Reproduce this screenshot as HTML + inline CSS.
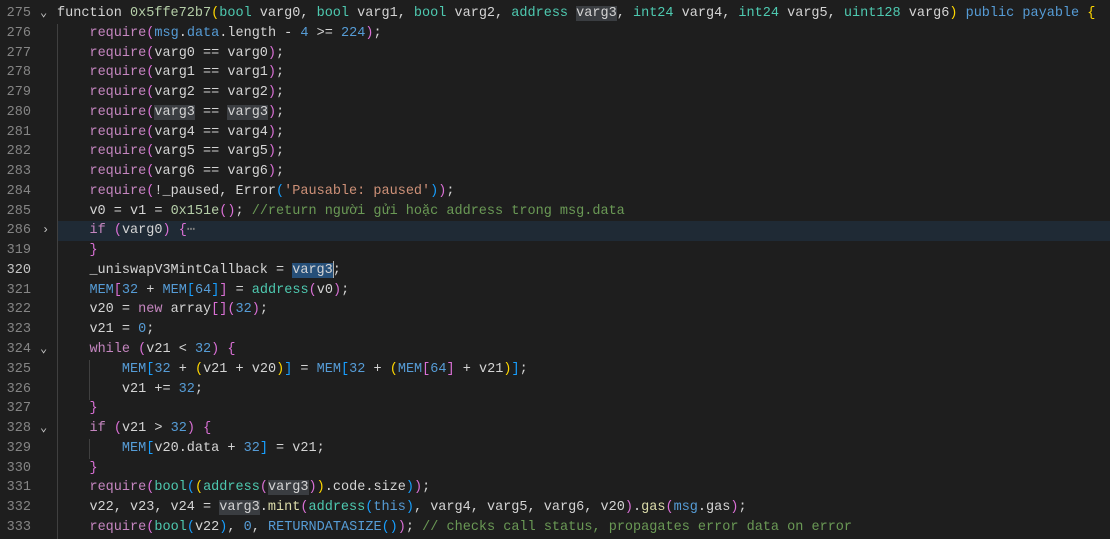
<!DOCTYPE html>
<html><head><meta charset="utf-8"><style>
html,body{margin:0;padding:0;background:#1e1e1e;width:1110px;height:539px;overflow:hidden}
.ed{position:relative;padding-top:4px;font-family:"Liberation Mono",monospace;font-size:13.53px;color:#d4d4d4}
.l{position:relative;height:19.77px;line-height:19.77px;white-space:pre}
.n{position:absolute;left:0;width:31px;text-align:right;color:#858585}
.cur .n{color:#c6c6c6}
.c{position:absolute;left:57px}
.fold{position:absolute;left:40px;top:0;color:#c5c5c5;font-size:12px}
.hl{position:absolute;left:57px;right:0;top:0;bottom:0;background:#1f2a35}
.g{position:absolute;top:0;bottom:0;width:1px;background:#404040}
.k{color:#c586c0}.t{color:#4ec9b0}.b{color:#569cd6}.s{color:#ce9178}.cm{color:#6a9955}
.y{color:#ffd700}.p{color:#da70d6}.q{color:#179fff}.h{color:#b5cea8}.f{color:#dcdcaa}
.w{background:#3a3d41}.sel{background:#264f78}
.caret{display:inline-block;width:1px;height:17px;background:#aeafad;vertical-align:middle;margin-right:-1px}
</style></head><body><div class="ed">
<div class="l"><span class="n">275</span><span class="fold">⌄</span><span class="c">function <span class="h">0x5ffe72b7</span><span class="y">(</span><span class="t">bool</span> varg0, <span class="t">bool</span> varg1, <span class="t">bool</span> varg2, <span class="t">address</span> <span class="w">varg3</span>, <span class="t">int24</span> varg4, <span class="t">int24</span> varg5, <span class="t">uint128</span> varg6<span class="y">)</span> <span class="b">public</span> <span class="b">payable</span> <span class="y">{</span></span></div>
<div class="l"><span class="n">276</span><span class="c">    <span class="k">require</span><span class="p">(</span><span class="b">msg</span>.<span class="b">data</span>.length - <span class="b">4</span> &gt;= <span class="b">224</span><span class="p">)</span>;</span></div>
<div class="l"><span class="n">277</span><span class="c">    <span class="k">require</span><span class="p">(</span>varg0 == varg0<span class="p">)</span>;</span></div>
<div class="l"><span class="n">278</span><span class="c">    <span class="k">require</span><span class="p">(</span>varg1 == varg1<span class="p">)</span>;</span></div>
<div class="l"><span class="n">279</span><span class="c">    <span class="k">require</span><span class="p">(</span>varg2 == varg2<span class="p">)</span>;</span></div>
<div class="l"><span class="n">280</span><span class="c">    <span class="k">require</span><span class="p">(</span><span class="w">varg3</span> == <span class="w">varg3</span><span class="p">)</span>;</span></div>
<div class="l"><span class="n">281</span><span class="c">    <span class="k">require</span><span class="p">(</span>varg4 == varg4<span class="p">)</span>;</span></div>
<div class="l"><span class="n">282</span><span class="c">    <span class="k">require</span><span class="p">(</span>varg5 == varg5<span class="p">)</span>;</span></div>
<div class="l"><span class="n">283</span><span class="c">    <span class="k">require</span><span class="p">(</span>varg6 == varg6<span class="p">)</span>;</span></div>
<div class="l"><span class="n">284</span><span class="c">    <span class="k">require</span><span class="p">(</span>!_paused, Error<span class="q">(</span><span class="s">'Pausable: paused'</span><span class="q">)</span><span class="p">)</span>;</span></div>
<div class="l"><span class="n">285</span><span class="c">    v0 = v1 = <span class="h">0x151e</span><span class="p">()</span>; <span class="cm">//return người gửi hoặc address trong msg.data</span></span></div>
<div class="l"><span class="hl"></span><span class="n">286</span><span class="fold" style="left:42px">›</span><span class="c">    <span class="k">if</span> <span class="p">(</span>varg0<span class="p">)</span> <span class="p">{</span><span style="color:#808080">⋯</span></span></div>
<div class="l"><span class="n">319</span><span class="c">    <span class="p">}</span></span></div>
<div class="l cur"><span class="n">320</span><span class="c">    _uniswapV3MintCallback = <span class="sel">varg3</span><span class="caret"></span>;</span></div>
<div class="l"><span class="n">321</span><span class="c">    <span class="b">MEM</span><span class="p">[</span><span class="b">32</span> + <span class="b">MEM</span><span class="q">[</span><span class="b">64</span><span class="q">]</span><span class="p">]</span> = <span class="t">address</span><span class="p">(</span>v0<span class="p">)</span>;</span></div>
<div class="l"><span class="n">322</span><span class="c">    v20 = <span class="k">new</span> array<span class="p">[]</span><span class="p">(</span><span class="b">32</span><span class="p">)</span>;</span></div>
<div class="l"><span class="n">323</span><span class="c">    v21 = <span class="b">0</span>;</span></div>
<div class="l"><span class="n">324</span><span class="fold">⌄</span><span class="c">    <span class="k">while</span> <span class="p">(</span>v21 &lt; <span class="b">32</span><span class="p">)</span> <span class="p">{</span></span></div>
<div class="l"><span class="n">325</span><span class="c">        <span class="b">MEM</span><span class="q">[</span><span class="b">32</span> + <span class="y">(</span>v21 + v20<span class="y">)</span><span class="q">]</span> = <span class="b">MEM</span><span class="q">[</span><span class="b">32</span> + <span class="y">(</span><span class="b">MEM</span><span class="p">[</span><span class="b">64</span><span class="p">]</span> + v21<span class="y">)</span><span class="q">]</span>;</span></div>
<div class="l"><span class="n">326</span><span class="c">        v21 += <span class="b">32</span>;</span></div>
<div class="l"><span class="n">327</span><span class="c">    <span class="p">}</span></span></div>
<div class="l"><span class="n">328</span><span class="fold">⌄</span><span class="c">    <span class="k">if</span> <span class="p">(</span>v21 &gt; <span class="b">32</span><span class="p">)</span> <span class="p">{</span></span></div>
<div class="l"><span class="n">329</span><span class="c">        <span class="b">MEM</span><span class="q">[</span>v20.data + <span class="b">32</span><span class="q">]</span> = v21;</span></div>
<div class="l"><span class="n">330</span><span class="c">    <span class="p">}</span></span></div>
<div class="l"><span class="n">331</span><span class="c">    <span class="k">require</span><span class="p">(</span><span class="t">bool</span><span class="q">(</span><span class="y">(</span><span class="t">address</span><span class="p">(</span><span class="w">varg3</span><span class="p">)</span><span class="y">)</span>.code.size<span class="q">)</span><span class="p">)</span>;</span></div>
<div class="l"><span class="n">332</span><span class="c">    v22, v23, v24 = <span class="w">varg3</span>.<span class="f">mint</span><span class="p">(</span><span class="t">address</span><span class="q">(</span><span class="b">this</span><span class="q">)</span>, varg4, varg5, varg6, v20<span class="p">)</span>.<span class="f">gas</span><span class="p">(</span><span class="b">msg</span>.gas<span class="p">)</span>;</span></div>
<div class="l"><span class="n">333</span><span class="c">    <span class="k">require</span><span class="p">(</span><span class="t">bool</span><span class="q">(</span>v22<span class="q">)</span>, <span class="b">0</span>, <span class="b">RETURNDATASIZE</span><span class="q">()</span><span class="p">)</span>; <span class="cm">// checks call status, propagates error data on error</span></span></div>
<div class="g" style="left:57px;top:24px;height:515px"></div>
<div class="g" style="left:89px;top:360px;height:40px"></div>
<div class="g" style="left:89px;top:439px;height:20px"></div>
</div></body></html>
